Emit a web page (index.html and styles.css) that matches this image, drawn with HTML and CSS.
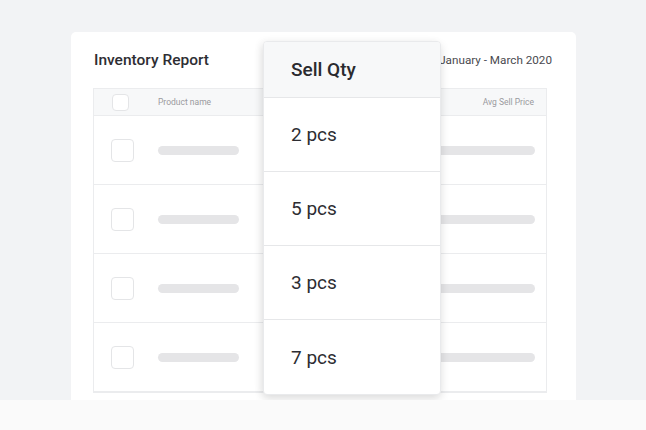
FILE: index.html
```html
<!DOCTYPE html>
<html>
<head>
<meta charset="utf-8">
<link rel="stylesheet" href="styles.css">
</head>
<body>
<div class="stage">
  <div class="card">
    <div class="card-head">
      <h1 class="title">Inventory Report</h1>
      <span class="period">January - March 2020</span>
    </div>
    <div class="table">
      <div class="thead">
        <span class="check check-sm"></span>
        <span class="th">Product name</span>
        <span class="th th-right">Avg Sell Price</span>
      </div>
      <div class="row"><span class="check"></span><span class="bar"></span><span class="bar bar-right"></span></div>
      <div class="row"><span class="check"></span><span class="bar"></span><span class="bar bar-right"></span></div>
      <div class="row"><span class="check"></span><span class="bar"></span><span class="bar bar-right"></span></div>
      <div class="row"><span class="check"></span><span class="bar"></span><span class="bar bar-right"></span></div>
    </div>
  </div>
  <div class="popup">
    <div class="popup-head">Sell Qty</div>
    <div class="popup-row">2 pcs</div>
    <div class="popup-row">5 pcs</div>
    <div class="popup-row">3 pcs</div>
    <div class="popup-row">7 pcs</div>
  </div>
</div>
<div class="footer"></div>
</body>
</html>
```
FILE: styles.css
```css
* { box-sizing: border-box; }
html, body { margin: 0; padding: 0; }
body {
  width: 646px;
  height: 430px;
  overflow: hidden;
  font-family: Roboto, "Liberation Sans", sans-serif;
  background: #fafafa;
}
.stage {
  position: relative;
  height: 400px;
  background: #f2f3f5;
  padding: 32px 0 0 71px;
  overflow: hidden;
}
.card {
  width: 505px;
  height: 400px;
  background: #fff;
  border-radius: 5px;
  padding: 0 24px 0 22px;
}
.card-head {
  display: flex;
  justify-content: space-between;
  align-items: center;
  height: 56px;
}
.title {
  margin: 0 0 0 1px;
  font-size: 15.5px;
  font-weight: 500;
  color: #2e2e33;
}
.period {
  font-size: 11.7px;
  color: #4a4a4f;
}
.table {
  width: 454px;
  border: 1px solid #ebecee;
  border-top: none;
}
.thead {
  display: flex;
  align-items: center;
  height: 28px;
  background: #f7f8f9;
  border-top: 1px solid #ebecee;
  border-bottom: 1px solid #ebecee;
  padding: 0 12px 0 18px;
}
.th {
  font-size: 8.5px;
  color: #9a9a9e;
}
.th-right { margin-left: auto; }
.check {
  flex: none;
  width: 23px;
  height: 23px;
  border: 1px solid #e4e5e7;
  border-radius: 4px;
  background: #fff;
  margin-right: 24px;
}
.check-sm {
  width: 17px;
  height: 17px;
  margin-right: 29px;
}
.row {
  display: flex;
  align-items: center;
  height: 69px;
  border-bottom: 1px solid #ebecee;
  padding: 0 11px 0 17px;
}
.bar {
  width: 81px;
  height: 9px;
  border-radius: 5px;
  background: #e5e5e7;
}
.bar-right {
  width: 120px;
  margin-left: auto;
}
.popup {
  position: absolute;
  left: 263px;
  top: 41px;
  width: 178px;
  background: #fff;
  border: 1px solid #e9eaec;
  border-radius: 4px;
  box-shadow: 0 4px 10px rgba(0,0,0,0.12), -3px 0 8px rgba(0,0,0,0.04);
  overflow: hidden;
}
.popup-head {
  height: 56px;
  display: flex;
  align-items: center;
  padding-left: 27px;
  background: #f7f8f9;
  border-bottom: 1px solid #e6e7e9;
  font-size: 19px;
  font-weight: 500;
  color: #2a2a2f;
}
.popup-row {
  height: 74px;
  display: flex;
  align-items: center;
  padding-left: 27px;
  border-bottom: 1px solid #e6e7e9;
  font-size: 19px;
  color: #2d2d32;
}
.popup-row:last-child { border-bottom: none; }
.footer {
  height: 30px;
  background: #fafafa;
}
```
